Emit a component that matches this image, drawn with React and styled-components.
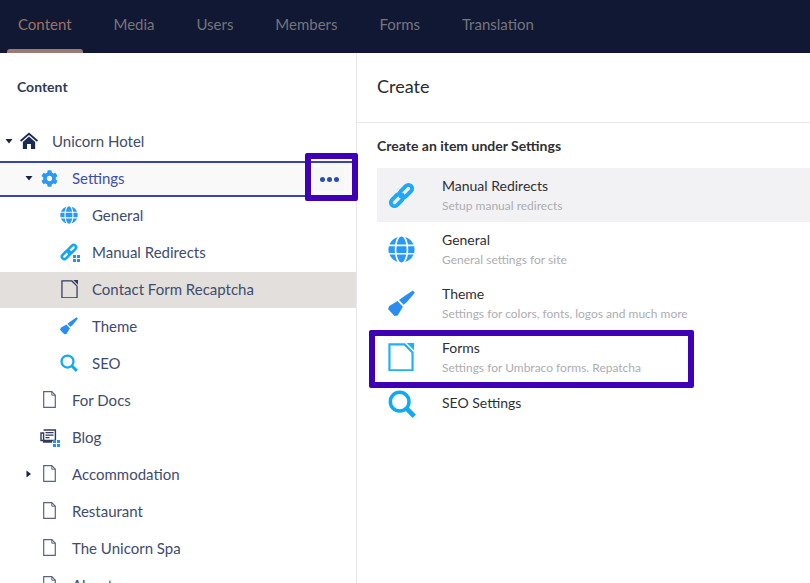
import React from 'react';
import styled, { createGlobalStyle } from 'styled-components';
import { FaCog, FaGlobe } from 'react-icons/fa';

const GlobalStyle = createGlobalStyle`
  html, body {
    margin: 0;
    padding: 0;
    height: 100%;
    overflow: hidden;
    background: #fff;
  }
  body {
    font-family: Lato, "Open Sans", sans-serif;
  }
`;

const Page = styled.div`
  width: 810px;
  height: 583px;
  display: flex;
  flex-direction: column;
  overflow: hidden;
`;

const TopBar = styled.nav`
  height: 53px;
  flex: none;
  background: #111833;
  display: flex;
  padding-left: 7px;
  gap: 19.9px;
`;

const Tab = styled.div`
  position: relative;
  padding: 0 11px;
  font-size: 15px;
  line-height: 49px;
  color: ${(p) => (p.$active ? '#9b7367' : '#74757d')};

  &::after {
    content: ${(p) => (p.$active ? '""' : 'none')};
    position: absolute;
    left: 0;
    right: 0;
    bottom: 0;
    height: 4px;
    border-radius: 3px 3px 0 0;
    background: #9c7a73;
  }
`;

const Body = styled.div`
  flex: 1;
  display: flex;
  min-height: 0;
`;

const TreePane = styled.aside`
  width: 356px;
  flex: none;
  border-right: 1px solid #e9e9eb;
  position: relative;
`;

const TreeTitle = styled.h2`
  margin: 0;
  height: 69px;
  padding: 25px 0 0 17px;
  box-sizing: border-box;
  font-size: 14px;
  line-height: 17px;
  font-weight: 700;
  color: #303a58;
`;

const Row = styled.div`
  height: ${(p) => (p.$selected || p.$hover ? 36 : 37)}px;
  margin: ${(p) => (p.$selected || p.$hover ? '2px 0 -1px' : '0')};
  box-sizing: border-box;
  display: flex;
  align-items: center;
  padding-left: ${(p) => p.$level * 20}px;
  padding-bottom: ${(p) => (p.$selected || p.$hover ? 2 : 0)}px;
  font-size: 15px;
  color: ${(p) => (p.$selected ? '#3a50ad' : '#414c6d')};
  background: ${(p) => (p.$selected ? '#f9f9f9' : p.$hover ? '#e2dfdc' : 'transparent')};
  border-top: 2px solid ${(p) => (p.$selected ? '#3544b1' : 'transparent')};
  border-bottom: 2px solid ${(p) => (p.$selected ? '#3544b1' : 'transparent')};
`;

const Caret = styled.span`
  width: 20px;
  flex: none;
  display: flex;
  padding-left: 5px;
  box-sizing: border-box;
  color: #1b2444;

  svg {
    display: block;
  }
`;

const IconBox = styled.span`
  width: 18px;
  height: 20px;
  flex: none;
  margin-right: 14px;
  display: flex;
  align-items: center;
  justify-content: center;
  position: relative;
  color: ${(p) => p.$color || '#303a58'};
`;

const Badge = styled.svg`
  position: absolute;
  right: -2px;
  bottom: 0;
`;

const DotsButton = styled.div`
  position: absolute;
  left: 314px;
  top: 114px;
  width: 30px;
  height: 24px;
  display: flex;
  align-items: center;
  justify-content: center;
  gap: 2px;
  background: #f7f7f8;
`;

const Dot = styled.span`
  width: 5px;
  height: 5px;
  border-radius: 50%;
  background: #2a4fa5;
`;

const Annotation = styled.div`
  position: absolute;
  box-sizing: border-box;
  border: 6px solid #3f00b5;
  border-radius: 2px;
  left: ${(p) => p.$x}px;
  top: ${(p) => p.$y}px;
  width: ${(p) => p.$w}px;
  height: ${(p) => p.$h}px;
  pointer-events: none;
`;

const CreatePane = styled.main`
  flex: 1;
  position: relative;
  min-width: 0;
`;

const CreateHeader = styled.header`
  height: 70px;
  box-sizing: border-box;
  padding: 21px 0 0 20px;
  border-bottom: 1px solid #e9e9eb;
  font-size: 18px;
  line-height: 24px;
  color: #2b2b2e;
`;

const CreateBody = styled.div`
  padding: 14px 0 0 20px;
`;

const Lead = styled.h3`
  margin: 0 0 13px;
  font-size: 14px;
  line-height: 18px;
  font-weight: 700;
  color: #2f2f33;
`;

const Option = styled.div`
  height: ${(p) => (p.$compact ? 40 : 54)}px;
  display: flex;
  align-items: flex-start;
  background: ${(p) => (p.$hover ? '#f2f2f4' : 'transparent')};
`;

const OptionIcon = styled.span`
  width: 65px;
  height: ${(p) => (p.$compact ? 40 : 54)}px;
  flex: none;
  display: flex;
  align-items: center;
  padding-left: 11px;
  box-sizing: border-box;
  color: ${(p) => p.$color || '#1fa9f5'};
`;

const OptionText = styled.div`
  padding-top: ${(p) => (p.$compact ? 10 : 9)}px;
`;

const OptionName = styled.div`
  font-size: 14px;
  line-height: 18px;
  color: #2f2f33;
`;

const OptionDesc = styled.div`
  font-size: 12px;
  line-height: 15px;
  margin-top: 3px;
  color: #adadb2;
`;

const DocIcon = ({ size = 18, color = '#303a58', stroke = 1.3 }) => (
  <svg width={size} height={(size * 20) / 18} viewBox="0 0 18 20" fill="none">
    <path d="M1 1H11.5L17 6.5V19H1Z" stroke={color} strokeWidth={stroke} />
    <path d="M13 0H18V5Z" fill={color} />
  </svg>
);

const PlainDoc = () => (
  <svg width="13" height="17" viewBox="0 0 13 17" fill="none">
    <path d="M.7.7H8.8L12.3 4.2V16.3H.7Z" stroke="#5a6382" strokeWidth="1.2" />
    <path d="M8.8.7V4.2H12.3" stroke="#5a6382" strokeWidth="1" />
  </svg>
);

const HomeIcon = ({ size = 19 }) => (
  <svg width={size} height={size} viewBox="0 0 19 19" fill="#1b2a52">
    <path d="M9.5 1 19 9.2 17.8 10.7 9.5 3.6 1.2 10.7 0 9.2Z" />
    <path d="M9.5 5.4 16 11V18.5H11.6V13.2H7.4V18.5H3V11Z" />
  </svg>
);

const LinkIcon = ({ size = 26 }) => (
  <svg width={size} height={size} viewBox="-1 -1 26 26" fill="none" stroke="currentColor" strokeWidth="3.8">
    <g transform="rotate(-45 12 12)">
      <rect x="-1" y="8.5" width="14" height="7" rx="3.5" />
      <rect x="11" y="8.5" width="14" height="7" rx="3.5" />
    </g>
  </svg>
);

const BrushIcon = ({ size = 18, color = '#2a8df0' }) => (
  <svg width={size} height={size} viewBox="0 0 25 24" fill={color}>
    <path d="M23 0 24.8 2 17.5 10.5 14.5 13.2 10.2 8.8 14 6Z" />
    <path d="M8.8 9.8 13.8 15 9 23 6 23.6 0 17.2 1.2 14.4Z" />
  </svg>
);

const LoupeIcon = ({ size = 18, color = '#0fa9f5' }) => (
  <svg width={size} height={size} viewBox="0 0 24 24" fill="none" stroke={color}>
    <circle cx="10" cy="10" r="8" strokeWidth="3" />
    <path d="M16 16 22.5 22.5" strokeWidth="4" />
  </svg>
);

const BlogIcon = () => (
  <svg width="18" height="15" viewBox="0 0 18 15" fill="none" stroke="#303a58">
    <path d="M3.6 1H15.4V11.5H1V4H3.6V13H12" strokeWidth="1.4" />
    <path d="M5.5 3.6H13.5M5.5 6.2H13.5M5.5 8.6H9.5" strokeWidth="1.3" />
  </svg>
);

const GridBadge = () => (
  <Badge width="7" height="7" viewBox="0 0 7 7" fill="#2a8df0">
    <rect width="3" height="3" />
    <rect x="4" width="3" height="3" />
    <rect y="4" width="3" height="3" />
    <rect x="4" y="4" width="3" height="3" />
  </Badge>
);

const CaretGlyph = ({ open }) => (
  <svg width="8" height="8" viewBox="0 0 8 8" fill="currentColor">
    {open ? <path d="M.5 2H7.5L4 6.5Z" /> : <path d="M1.5.5 6 4 1.5 7.5Z" />}
  </svg>
);

const treeRows = [
  { label: 'Unicorn Hotel', level: 0, caret: 'open', icon: <HomeIcon /> },
  { label: 'Settings', level: 1, caret: 'open', selected: true, iconColor: '#2a98f5', icon: <FaCog size={17} /> },
  { label: 'General', level: 2, iconColor: '#2a98f5', icon: <FaGlobe size={18} /> },
  { label: 'Manual Redirects', level: 2, iconColor: '#15a5f2', icon: <><LinkIcon size={18} /><GridBadge /></> },
  { label: 'Contact Form Recaptcha', level: 2, hover: true, icon: <DocIcon size={17} /> },
  { label: 'Theme', level: 2, icon: <BrushIcon /> },
  { label: 'SEO', level: 2, icon: <LoupeIcon /> },
  { label: 'For Docs', level: 1, icon: <PlainDoc /> },
  { label: 'Blog', level: 1, icon: <><BlogIcon /><GridBadge /></> },
  { label: 'Accommodation', level: 1, caret: 'closed', icon: <PlainDoc /> },
  { label: 'Restaurant', level: 1, icon: <PlainDoc /> },
  { label: 'The Unicorn Spa', level: 1, icon: <PlainDoc /> },
  { label: 'About', level: 1, icon: <PlainDoc /> },
];

const options = [
  { name: 'Manual Redirects', desc: 'Setup manual redirects', hover: true, icon: <LinkIcon size={27} /> },
  { name: 'General', desc: 'General settings for site', color: '#2a98f5', icon: <FaGlobe size={27} /> },
  { name: 'Theme', desc: 'Settings for colors, fonts, logos and much more', icon: <BrushIcon size={27} /> },
  { name: 'Forms', desc: 'Settings for Umbraco forms. Repatcha', icon: <DocIcon size={26} color="#1fb0f8" stroke={1.5} /> },
  { name: 'SEO Settings', desc: '', compact: true, icon: <LoupeIcon size={28} /> },
];

const tabs = ['Content', 'Media', 'Users', 'Members', 'Forms', 'Translation'];

export default function App() {
  return (
    <Page>
      <GlobalStyle />
      <TopBar>
        {tabs.map((tab, i) => (
          <Tab key={tab} $active={i === 0}>{tab}</Tab>
        ))}
      </TopBar>
      <Body>
        <TreePane>
          <TreeTitle>Content</TreeTitle>
          {treeRows.map((row) => (
            <Row key={row.label} $level={row.level} $selected={row.selected} $hover={row.hover}>
              <Caret>{row.caret && <CaretGlyph open={row.caret === 'open'} />}</Caret>
              <IconBox $color={row.iconColor}>{row.icon}</IconBox>
              {row.label}
            </Row>
          ))}
          <DotsButton>
            <Dot /><Dot /><Dot />
          </DotsButton>
          <Annotation $x={305} $y={100} $w={53} $h={48} />
        </TreePane>
        <CreatePane>
          <CreateHeader>Create</CreateHeader>
          <CreateBody>
            <Lead>Create an item under Settings</Lead>
            {options.map((option) => (
              <Option key={option.name} $hover={option.hover} $compact={option.compact}>
                <OptionIcon $color={option.color} $compact={option.compact}>{option.icon}</OptionIcon>
                <OptionText $compact={option.compact}>
                  <OptionName>{option.name}</OptionName>
                  {option.desc && <OptionDesc>{option.desc}</OptionDesc>}
                </OptionText>
              </Option>
            ))}
          </CreateBody>
          <Annotation $x={12} $y={277} $w={325} $h={58} />
        </CreatePane>
      </Body>
    </Page>
  );
}
